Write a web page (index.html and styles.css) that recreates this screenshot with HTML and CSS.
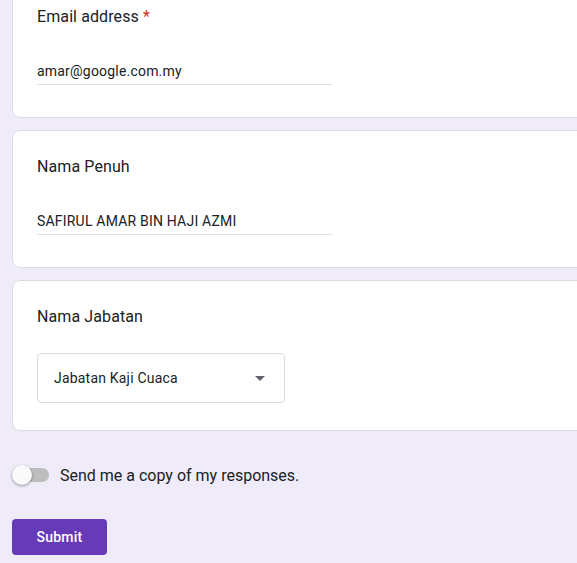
FILE: index.html
```html
<!DOCTYPE html>
<html lang="ms">
<head>
<meta charset="utf-8">
<title>Form</title>
<link rel="stylesheet" href="styles.css">
</head>
<body>
<main class="form">
  <section class="card">
    <div class="q-title">Email address <span class="req">*</span></div>
    <div class="text-input">amar@google.com.my</div>
  </section>
  <section class="card">
    <div class="q-title">Nama Penuh</div>
    <div class="text-input">SAFIRUL AMAR BIN HAJI AZMI</div>
  </section>
  <section class="card">
    <div class="q-title">Nama Jabatan</div>
    <div class="select">
      <span class="select-value">Jabatan Kaji Cuaca</span>
      <span class="select-arrow"></span>
    </div>
  </section>
  <div class="copy-row">
    <span class="switch"><span class="switch-track"></span><span class="switch-knob"></span></span>
    <span class="copy-label">Send me a copy of my responses.</span>
  </div>
  <button class="submit" type="button">Submit</button>
</main>
</body>
</html>
```
FILE: styles.css
```css
html, body {
  margin: 0;
  padding: 0;
  background: #f0ebf8;
  overflow: hidden;
}
body {
  font-family: Roboto, "Liberation Sans", Arial, sans-serif;
  color: #202124;
}
.form {
  margin-top: -20px;
  padding-left: 12px;
  display: flex;
  flex-direction: column;
  align-items: flex-start;
  gap: 12px;
}
.card {
  box-sizing: border-box;
  width: 640px;
  flex-shrink: 0;
  background: #fff;
  border: 1px solid #dadce0;
  border-radius: 8px;
  padding: 24px 24px 24px 24px;
}
.q-title {
  font-size: 16px;
  line-height: 24px;
  letter-spacing: 0.1px;
  color: #202124;
}
.req {
  color: #d93025;
}
.text-input {
  width: 295px;
  margin-top: 24px;
  margin-bottom: 8px;
  padding: 8px 0 3px;
  font-size: 14px;
  line-height: 20px;
  letter-spacing: 0.2px;
  border-bottom: 1px solid #e0e0e0;
  color: #202124;
}
.select {
  box-sizing: border-box;
  width: 248px;
  height: 50px;
  margin-top: 24px;
  margin-bottom: 3px;
  border: 1px solid #dadce0;
  border-radius: 4px;
  padding: 0 19px 0 16px;
  display: flex;
  align-items: center;
  justify-content: space-between;
}
.select-value {
  font-size: 14px;
  letter-spacing: 0.2px;
  color: #202124;
}
.select-arrow {
  width: 0;
  height: 0;
  border-left: 5px solid transparent;
  border-right: 5px solid transparent;
  border-top: 5px solid #5f6368;
}
.copy-row {
  margin-top: 20px;
  display: flex;
  align-items: center;
  gap: 11px;
  height: 24px;
}
.switch {
  position: relative;
  width: 37px;
  height: 20px;
  display: block;
}
.switch-track {
  position: absolute;
  left: 2px;
  top: 3px;
  width: 35px;
  height: 14px;
  border-radius: 7px;
  background: #bdbdbd;
}
.switch-knob {
  position: absolute;
  left: 0;
  top: 0;
  width: 20px;
  height: 20px;
  border-radius: 50%;
  background: #fafafa;
  box-shadow: 0 1px 3px rgba(0,0,0,0.4);
}
.copy-label {
  font-size: 16px;
  color: #202124;
}
.submit {
  margin-top: 20px;
  width: 95px;
  height: 36px;
  border: none;
  border-radius: 4px;
  background: #673ab7;
  color: #fff;
  font-family: Roboto, "Liberation Sans", Arial, sans-serif;
  font-size: 14px;
  font-weight: 500;
  letter-spacing: 0.25px;
  padding: 0;
}
```
